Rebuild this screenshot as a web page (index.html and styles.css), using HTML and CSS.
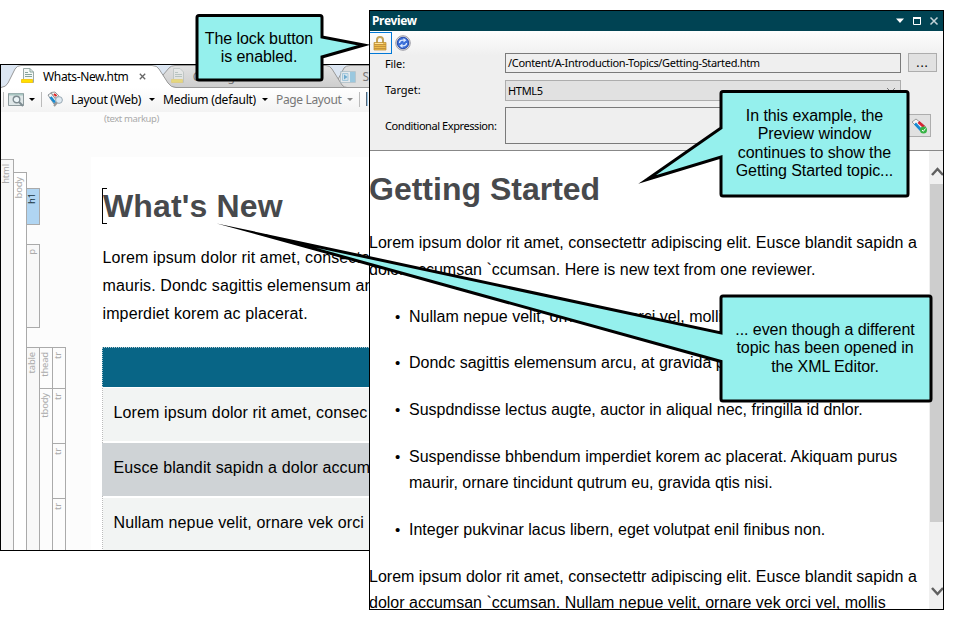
FILE: index.html
```html
<!DOCTYPE html>
<html lang="en">
<head>
<meta charset="utf-8">
<title>Preview window</title>
<link rel="stylesheet" href="styles.css">
</head>
<body>
<main class="desktop">
  <section class="editor">
    <div class="tabs">
      <svg class="tab-shapes" width="369" height="23" viewBox="0 0 369 23">
        <defs><linearGradient id="tg" x2="0" y2="1"><stop stop-color="#e2e2e2"/><stop offset="1" stop-color="#cdcdcd"/></linearGradient></defs>
        <path d="M0 0H369V23H0Z" fill="#dce6f2"/>
        <path d="M333 22L343 3Q345 .5 349 .5H369V22.500H333Z" fill="#dedede" stroke="#999"/>
        <path d="M165 22.500L162 10L168 3Q170 .5 174 .5H325Q329 .5 331 4L341 20Q343 22.500 346 22.500Z" fill="url(#tg)" stroke="#999"/>
        <path d="M0 22.500Q5 22 7 18L14 4Q16 .5 20 .5H151Q156 .5 158 4L167 18Q170 22.500 175 22.500V23H0Z" fill="#fff"/>
        <path d="M0 22.500Q5 22 7 18L14 4Q16 .5 20 .5H151Q156 .5 158 4L167 18Q170 22.500 175 22.500H369" fill="none" stroke="#999"/>
      </svg>
      <svg class="doc" width="14" height="16" viewBox="0 0 14 16"><path d="M2.500 .5H9L12.500 4V14.500H2.500Z" fill="#f4f8f6" stroke="#9baaa7"/><path d="M9 .5V4H12.500M4 4.500H7M4 6.500H11M4 8.500H11" fill="none" stroke="#87a49b"/><path d="M.5 11.500H11.500V14.500H.5Z" fill="#ffe000" stroke="#f5c91a"/></svg>
      <span class="tab-name">Whats-New.htm</span>
      <svg class="tab-close" width="7" height="7" viewBox="0 0 7 7"><path d="M.8 .8L6.200 6.200M6.200 .8L.8 6.200" stroke="#666" stroke-width="1.300"/></svg>
      <svg class="doc faded" width="14" height="16" viewBox="0 0 14 16"><path d="M2.500 .5H9L12.500 4V14.500H2.500Z" fill="#f4f8f6" stroke="#9baaa7"/><path d="M4 4.500H7M4 6.500H11M4 8.500H11" stroke="#87a49b"/><path d="M.5 11.500H11.500V14.500H.5Z" fill="#ffe000" stroke="#f5c91a"/></svg>
      <span class="tab-second">Getting</span>
      <svg class="media" width="16" height="12" viewBox="0 0 16 12"><path d="M.5 .5H15.500V11.500H.5Z" fill="#e9eff2" stroke="#a8bdc7"/><path d="M10 1H15V11H10Z" fill="#7ebfe0"/><path d="M2.500 2.500H8V9.500H2.500Z" fill="#cfe6f3" stroke="#8dbfda"/><path d="M4 3.500L7.500 6L4 8.500Z" fill="#3f95c8"/></svg>
      <span class="tab-third">S</span>
    </div>
    <div class="ribbon">
      <i class="sep"></i>
      <svg class="find" width="17" height="15" viewBox="0 0 17 15"><path d="M.5 1.500H15.500V13.500H.5Z" fill="#dfe7e8" stroke="#8d9a9d"/><path d="M1 2.500H15" stroke="#a9c6c2" stroke-width="2"/><circle cx="8.500" cy="7.500" r="3.300" fill="#edf5f8" stroke="#7e8c91" stroke-width="1.400"/><path d="M11 10L15 14" stroke="#7e8c91" stroke-width="2"/></svg>
      <i class="arrow a1"></i><i class="sep s2"></i>
      <svg class="tags" width="17" height="16" viewBox="0 0 17 16"><path d="M1 4L4 2L10 10L7 13Z" fill="#f6f6f6" stroke="#8a9298"/><path d="M3.500 6L8 11.500" stroke="#168bd2" stroke-width="2.600"/><path d="M4 1.500L8 1L12 5L8 7Z" fill="#f6f6f6" stroke="#9a9a9a"/><path d="M7 3L9.500 5" stroke="#d22" stroke-width="2.200"/><circle cx="12" cy="9" r="3.400" fill="#dfeaf2" stroke="#9aa9b3"/><path d="M10 11.500L7 15" stroke="#999" stroke-width="2"/></svg>
      <span class="rt layout">Layout (Web)</span><i class="arrow a2"></i>
      <span class="rt medium">Medium (default)</span><i class="arrow a3"></i>
      <span class="rt page-layout">Page Layout</span><i class="arrow a4"></i>
      <i class="sep s3"></i><i class="cut"></i>
    </div>
    <div class="canvas">
      <div class="markup">(text markup)</div>
      <div class="work">
        <div class="structure">
          <div class="bar html"><b>html</b></div>
          <div class="bar body"><b>body</b></div>
          <div class="blocks">
            <div class="bar h1"><b>h1</b></div>
            <div class="bar p"><b>p</b></div>
            <div class="tbl">
              <div class="bar table"><b>table</b></div>
              <div class="parts">
                <div class="bar thead"><b>thead</b></div><div class="bar"><b>tr</b></div>
                <div class="bar tbody"><b>tbody</b></div><div class="bar"><b>tr</b></div>
                <div class="bar"><b>tr</b></div>
                <div class="bar"><b>tr</b></div>
              </div>
            </div>
          </div>
        </div>
        <article class="page">
          <h1><i class="caret"></i><span>What's New</span></h1>
          <p>Lorem ipsum dolor rit amet, consecte<br>mauris. Dondc sagittis elemensum ar<br>imperdiet korem ac placerat.</p>
          <div class="grid">
            <div class="head"></div>
            <div class="row r1">Lorem ipsum dolor rit amet, consec</div>
            <div class="row alt">Eusce blandit sapidn a dolor accum</div>
            <div class="row">Nullam nepue velit, ornare vek orci</div>
          </div>
        </article>
      </div>
    </div>
  </section>

  <section class="preview">
    <header class="title"><span>Preview</span>
      <svg width="44" height="10" viewBox="0 0 44 10"><path d="M0 2.500H8L4 7Z" fill="#fff"/><path d="M17.500 1.500H24.500V8.500H17.500Z" fill="none" stroke="#fff"/><path d="M17 2H25" stroke="#fff" stroke-width="2"/><path d="M34.500 1.500L41.500 8.500M41.500 1.500L34.500 8.500" stroke="#c4d3d8" stroke-width="1.500"/></svg>
    </header>
    <div class="controls">
      <div class="tools">
        <div class="lock"><svg width="14" height="15" viewBox="0 0 14 15"><path d="M4 7V4Q4 1 7 1T10 4V7" fill="none" stroke="#c3a258" stroke-width="2"/><path d="M1 6.500H13V14H1Z" fill="#edbc4c" stroke="#b98b31" stroke-width=".7"/><path d="M1 8.500H13M1 10.500H13M1 12.500H13" stroke="#c5933b"/><path d="M2 7.500H10" stroke="#ffe39b"/></svg></div>
        <svg class="refresh" width="16" height="16" viewBox="0 0 16 16"><circle cx="8" cy="8" r="7.300" fill="#d3d3d9" stroke="#a0a0a8"/><circle cx="8" cy="8" r="5.700" fill="#3b6fd8" stroke="#2a4eae"/><path d="M4.500 8Q4.500 5.200 8 5.200H9M11.500 8Q11.500 10.800 8 10.800H7" fill="none" stroke="#dce9ff" stroke-width="1.300"/><path d="M8.500 3L11.500 5.200L8.500 7.500ZM7.500 8.500V13L4.500 10.800Z" fill="#dce9ff"/></svg>
      </div>
      <div class="form">
        <label class="t-file">File:</label><div class="field file"><span>/Content/A-Introduction-Topics/Getting-Started.htm</span></div><button class="dots">...</button>
        <label class="t-target">Target:</label><div class="field target"><span>HTML5</span><svg width="10" height="6" viewBox="0 0 10 6"><path d="M1 1L5 5L9 1" fill="none" stroke="#777"/></svg></div><span></span>
        <label class="t-cond">Conditional Expression:</label><div class="field cond"></div><button class="cond-btn"><svg width="17" height="16" viewBox="0 0 17 16"><path d="M1 4L5 1L15 9L11 14Z" fill="#f7f7f7" stroke="#999"/><path d="M4 5.500L10 12" stroke="#168bd2" stroke-width="2.800"/><path d="M7.500 4L13 9" stroke="#da2333" stroke-width="2.800"/><circle cx="12.500" cy="12" r="3.500" fill="#36b344"/><path d="M11 12L12.300 13.300L14.500 10.500" fill="none" stroke="#fff"/></svg></button>
      </div>
    </div>
    <div class="viewer">
      <article class="topic">
        <h1>Getting Started</h1>
        <p>Lorem ipsum dolor rit amet, consectettr adipiscing elit. Eusce blandit sapidn a<br>dolor accumsan `ccumsan. Here is new text from one reviewer.</p>
        <ul>
          <li>Nullam nepue velit, ornare vek orci vel, mollis</li>
          <li>Dondc sagittis elemensum arcu, at gravida purus</li>
          <li>Suspdndisse lectus augte, auctor in aliqual nec, fringilla id dnlor.</li>
          <li>Suspendisse bhbendum imperdiet korem ac placerat. Akiquam purus<br>maurir, ornare tincidunt qutrum eu, gravida qtis nisi.</li>
          <li>Integer pukvinar lacus libern, eget volutpat enil finibus non.</li>
        </ul>
        <p class="last">Lorem ipsum dolor rit amet, consectettr adipiscing elit. Eusce blandit sapidn a<br>dolor accumsan `ccumsan. Nullam nepue velit, ornare vek orci vel, mollis</p>
      </article>
      <div class="scroll">
        <svg width="13" height="33" viewBox="0 0 13 33"><path d="M2 24L7.500 18L13 24" fill="none" stroke="#606060" stroke-width="2.500"/></svg>
        <i class="thumb"></i>
        <svg width="13" height="18" viewBox="0 0 13 18"><path d="M2 4L7.500 10L13 4" fill="none" stroke="#606060" stroke-width="2.500"/></svg>
      </div>
    </div>
  </section>

  <svg class="callout-shapes" width="954" height="620" viewBox="0 0 954 620">
    <g fill="#95f0ed" stroke="#000" stroke-width="3" stroke-miterlimit="60">
      <path d="M199 15.500H320Q322 15.500 322 17.500V37L364 45L322 57V78Q322 80 320 80H199Q197 80 197 78V17.500Q197 15.500 199 15.500Z"/>
      <path d="M723 91.500H906Q908 91.500 908 93.500V194Q908 196 906 196H723Q721 196 721 194V157L647 179.500L721 128V93.500Q721 91.500 723 91.500Z"/>
      <path d="M723 296H929Q931 296 931 298V399Q931 401 929 401H723Q721 401 721 399V361.500L266 235.500L721 333V298Q721 296 723 296Z"/>
    </g>
  </svg>
  <div class="note n1">The lock button<br>is enabled.</div>
  <div class="note n2">In this example, the<br>Preview window<br>continues to show the<br>Getting Started topic...</div>
  <div class="note n3">... even though a different<br>topic has been opened in<br>the XML Editor.</div>
</main>
</body>
</html>
```
FILE: styles.css
```css
* { box-sizing: border-box; }
body { margin: 0; background: #fff; font-family: "Liberation Sans", Arial, sans-serif; color: #000; }
h1, p, ul { margin: 0; }
svg { display: block; flex: none; }
.desktop { position: relative; width: 954px; height: 620px; overflow: hidden; }

.editor { position: absolute; left: 0; top: 64px; width: 370px; height: 487px; border: 1px solid #000; overflow: hidden; background: #fcfcfc; }
.tabs { position: relative; display: flex; align-items: center; height: 23px; white-space: nowrap; font: 12px "Noto Sans", sans-serif; }
.tab-shapes { position: absolute; left: 0; top: 0; }
.tabs > :not(.tab-shapes) { position: relative; }
.doc { margin-left: 20px; margin-bottom: 2px; }
.tab-name { margin-left: 8px; width: 98px; letter-spacing: -.35px; }
.faded { opacity: .4; margin-left: 25px; }
.tab-second { margin-left: 8px; width: 151px; color: #777; }
.media { opacity: .7; }
.tab-third { margin-left: 6px; color: #777; }
.ribbon { display: flex; align-items: center; height: 24px; padding-bottom: 2px; white-space: nowrap; font: 12px "Noto Sans", sans-serif; background: linear-gradient(#fff, #f3f3f3); }
.sep { width: 1px; height: 15px; background: #bbb; margin-left: 2px; flex: none; }
.find { margin-left: 4px; }
.arrow { flex: none; border: 3px solid transparent; border-top: 3px solid #000; border-bottom: 0; }
.a1 { margin-left: 4px; }
.s2 { margin-left: 6px; }
.tags { margin-left: 5px; }
.rt { flex: none; }
.layout { margin-left: 7px; width: 78px; letter-spacing: -.28px; }
.medium { margin-left: 8px; width: 99px; letter-spacing: -.25px; }
.page-layout { margin-left: 8px; width: 71px; color: #777; letter-spacing: -.35px; }
.a4 { border-top-color: #888; }
.s3 { margin-left: 6px; }
.cut { width: 2px; height: 14px; margin-left: 6px; background: #9cc9e8; border-left: 1px solid #567; flex: none; }
.markup { height: 46px; padding-left: 103px; font: 9.5px/14px "Noto Sans", sans-serif; color: #aaa; letter-spacing: -.4px; }
.work { display: flex; height: 393px; }
.structure { display: flex; flex: none; width: 90px; padding-top: 1px; }
.bar { border: solid #aaa; border-width: 1px 1px 0 0; width: 13px; flex: none; background: #fcfcfc; color: #aaa; }
.bar b { display: block; writing-mode: vertical-rl; transform: rotate(180deg); font: 9.500px/12px "Noto Sans", sans-serif; padding-bottom: 4px; width: 12px; margin-left: -1px; letter-spacing: -.2px; }
.html { background: #f8f8f8; }
.body { margin-top: 13px; background: #fff; }
.blocks { margin-top: 29px; }
.h1 { height: 37px; background: #b0d5f2; color: #1a3440; border-bottom-width: 1px; }
.p { height: 84px; margin-top: 19px; border-bottom-width: 1px; background: #f8f8f8; }
.tbl { display: flex; margin-top: 19px; height: 210px; }
.table { background: #f8f8f8; }
.parts { display: grid; grid-template-columns: 13px 13px; grid-template-rows: 41px 55px 55px 55px; }
.tbody { grid-row: 2 / span 3; }
.page { flex: none; width: 278px; height: 394px; margin-top: -1px; padding: 31px 0 0 11px; background: #fff; white-space: nowrap; }
.page h1 { display: flex; height: 37px; font-size: 32px; line-height: 37px; color: #47494c; letter-spacing: .15px; }
.caret { width: 5px; height: 36px; margin-right: -4px; border: 1px solid #000; border-right: 0; flex: none; }
.page p { margin-top: 19px; padding-left: .5px; font-size: 16px; line-height: 28px; letter-spacing: .12px; }
.grid { margin-top: 19px; font-size: 16px; letter-spacing: .12px; border-left: 1px dotted #bbb; }
.head { height: 40px; margin-left: -1px; background: #086586; border: 1px dotted #b4cad1; border-width: 1px 0 0 1px; }
.row { height: 53px; margin-top: 2px; padding-left: 10.500px; line-height: 50px; background: #f2f4f3; }
.r1 { margin-top: 1px; }
.alt { background: #cfd3d6; margin-left: -1px; padding-left: 11.500px; }

.preview { position: absolute; left: 369px; top: 10px; width: 575px; height: 600px; border: 1px solid #000; background: #fff; overflow: hidden; }
.title { display: flex; align-items: center; justify-content: space-between; height: 20px; padding: 0 3px 0 2px; background: #004353; color: #fff; font: bold 12px "Noto Sans", sans-serif; letter-spacing: -.35px; }
.title span { margin-top: -2px; }
.controls { height: 120px; border-bottom: 1px solid #888; background: linear-gradient(#fdfdfd, #efefef 25px); }
.tools { display: flex; height: 24px; }
.lock { width: 22px; height: 22px; margin-top: 1px; border: 1px solid #0078d7; border-left: 0; padding: 3px 0 0 3px; }
.refresh { margin: 4px 0 0 3px; }
.form { display: grid; grid-template-columns: 120px 396px auto; grid-template-rows: 25px 27px 37px; justify-content: start; align-items: start; margin-top: -2px; padding-left: 15px; font: 11px "Noto Sans", sans-serif; letter-spacing: -.32px; }
.form label { line-height: 15px; white-space: nowrap; }
.t-file { margin-top: 3px; letter-spacing: -.1px; }
.t-target { margin-top: 4px; letter-spacing: 0; }
.t-cond { margin-top: 13px; letter-spacing: -.42px; }
.field { border: 1px solid #7a7a7a; background: #efefef; display: flex; align-items: center; justify-content: space-between; padding: 0 4px 1px 2px; }
.file { height: 20px; }
.target { height: 21px; margin-top: 2px; border-color: #adadad; background: #e1e1e1; }
.cond { height: 37px; margin-top: 2px; }
.form button { border: 1px solid #adadad; background: #e1e1e1; padding: 0; font: 12px "Noto Sans", sans-serif; display: flex; align-items: center; justify-content: center; }
.form .dots { width: 29px; height: 19px; margin-left: 7px; letter-spacing: 1px; }
.form .cond-btn { width: 24px; height: 23px; margin: 9px 0 0 6px; }
.viewer { display: flex; height: 458px; }
.topic { width: 560px; flex: none; margin-left: -1px; font-size: 16px; line-height: 26.600px; white-space: nowrap; }
.topic h1 { font-size: 32px; line-height: 40px; color: #47494c; margin-top: 18px; }
.topic p { margin-top: 21px; }
.topic ul { margin-top: 20.500px; padding: 0 0 0 40px; list-style: none; }
.topic li { margin-bottom: 20.100px; }
.topic .last { margin-top: 20.100px; }
.topic li::before { content: "•"; display: inline-block; width: 14px; margin-left: -14px; font-size: 15px; }
.scroll { width: 14px; background: #f0f0f0; display: flex; flex-direction: column; align-items: flex-end; }
.thumb { width: 13px; height: 338px; background: #cdcdcd; margin-bottom: 62px; flex: none; }

.callout-shapes { position: absolute; left: 0; top: 0; }
.note { position: absolute; text-align: center; white-space: nowrap; font-size: 16px; line-height: 18.300px; letter-spacing: -.07px; }
.n1 { left: 197.500px; top: 30px; width: 123px; }
.n2 { left: 722px; top: 107px; width: 185px; }
.n3 { left: 721px; top: 321px; width: 208px; }
```
